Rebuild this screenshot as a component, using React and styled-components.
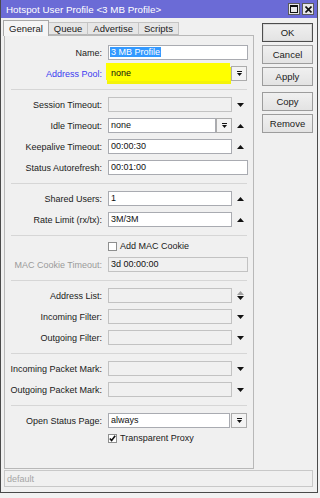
import React from 'react';
import styled, { createGlobalStyle } from 'styled-components';

const GlobalStyle = createGlobalStyle`
  html, body {
    margin: 0;
    padding: 0;
    background: #f2f2f2;
  }
  body {
    font-family: "Liberation Sans", Arial, sans-serif;
    font-size: 9px;
    color: #1a1a1a;
  }
`;

const Window = styled.div`
  width: 318px;
  height: 493px;
  box-sizing: border-box;
  background: #f0f0f0;
  border: 1px solid #4a4a4a;
  border-top: none;
  display: flex;
  flex-direction: column;
`;

const TitleBar = styled.div`
  height: 18px;
  flex-shrink: 0;
  background: #6b6bd6;
  color: #fff;
  display: flex;
  align-items: center;
  padding: 0 3px 0 5px;
  font-size: 9.8px;
`;

const Title = styled.div`
  flex: 1;
  white-space: nowrap;
`;

const CaptionButton = styled.div`
  width: 12px;
  height: 12px;
  box-sizing: border-box;
  margin-left: 2px;
  background: #e8e8e8;
  border: 1px solid #5a5a5a;
  display: flex;
  align-items: center;
  justify-content: center;
`;

const Body = styled.div`
  flex: 1;
  display: flex;
  flex-direction: column;
  padding: 2px 4px 5px 3px;
`;

const Main = styled.div`
  display: flex;
  gap: 8px;
`;

const LeftColumn = styled.div`
  width: 250px;
  display: flex;
  flex-direction: column;
`;

const TabStrip = styled.div`
  height: 15px;
  display: flex;
  align-items: flex-end;
  position: relative;
  z-index: 1;
`;

const Tab = styled.div`
  box-sizing: border-box;
  height: ${p => (p.$active ? 16 : 13)}px;
  margin-bottom: ${p => (p.$active ? -1 : 0)}px;
  margin-left: ${p => (p.$first ? -1 : 0)}px;
  padding: 0 5px;
  display: flex;
  align-items: center;
  background: ${p => (p.$active ? '#f5f5f5' : '#e6e6e6')};
  border: 1px solid ${p => (p.$active ? '#a8a8a8' : '#c4c4c4')};
  border-bottom: ${p => (p.$active ? 'none' : '1px solid #b8b8b8')};
  border-left: ${p => (p.$active || p.$first ? undefined : 'none')};
  font-size: 9.5px;
  white-space: nowrap;
`;

const Panel = styled.div`
  height: 434px;
  box-sizing: border-box;
  border: 1px solid #b8b8b8;
  background: #f0f0f0;
  padding-top: 9px;
  display: flex;
  flex-direction: column;
  gap: 6px;
`;

const Row = styled.div`
  height: 15px;
  display: flex;
  align-items: center;
`;

const Label = styled.div`
  width: 97px;
  flex-shrink: 0;
  margin-right: 6px;
  text-align: right;
  white-space: nowrap;
  color: ${p => p.$color || '#1a1a1a'};
`;

const Field = styled.div`
  width: ${p => p.$w}px;
  height: 15px;
  box-sizing: border-box;
  flex-shrink: 0;
  padding: 0 2px;
  line-height: 13px;
  white-space: nowrap;
  overflow: hidden;
  background: ${p => (p.$highlight ? '#ffff00' : p.$disabled ? '#f0f0f0' : '#fff')};
  border: 1px solid ${p => (p.$highlight ? '#ffff00' : p.$disabled ? '#c2c2c2' : '#a9abb1')};
  box-shadow: ${p => (p.$highlight ? '-1px -2px 0 1px #ffff00, 0 2px 0 1px #f4f40a' : 'none')};
  color: #111;
`;

const Selected = styled.span`
  background: #3399ff;
  color: #fff;
  padding: 0 1px;
  margin-left: -1px;
`;

const DropButton = styled.div`
  width: 16px;
  height: 15px;
  box-sizing: border-box;
  margin-left: ${p => (p.$joined ? 0 : 1)}px;
  flex-shrink: 0;
  border: 1px solid #acacac;
  background: #f3f3f3;
  display: flex;
  align-items: center;
  justify-content: center;
`;

const ArrowSlot = styled.div`
  width: 16px;
  flex-shrink: 0;
  display: flex;
  flex-direction: column;
  align-items: center;
  justify-content: center;
  gap: 1px;
`;

const Separator = styled.div`
  height: 1px;
  margin: 2px 6px 1px 6px;
  background: #d6d6d6;
`;

const CheckRow = styled.label`
  height: 10px;
  margin-top: ${p => p.$pull || 0}px;
  display: flex;
  align-items: center;
  padding-left: 103px;
  gap: 3px;
  white-space: nowrap;
`;

const Box = styled.span`
  width: 9px;
  height: 9px;
  box-sizing: border-box;
  border: 1px solid #8e8f8f;
  background: #fff;
  display: flex;
  align-items: center;
  justify-content: center;
`;

const StatusBar = styled.div`
  margin-top: 1px;
  height: 17px;
  box-sizing: border-box;
  border: 1px solid #c8c8c8;
  background: #f0f0f0;
  color: #a5a5a5;
  padding-left: 2px;
  display: flex;
  align-items: center;
`;

const ButtonColumn = styled.div`
  width: 51px;
  padding-top: 3px;
  display: flex;
  flex-direction: column;
  gap: 3px;
`;

const Button = styled.div`
  height: 19px;
  box-sizing: border-box;
  margin-top: ${p => p.$gapTop || 0}px;
  border: 1px solid ${p => (p.$default ? '#4d4d4d' : '#9c9c9c')};
  box-shadow: ${p => (p.$default ? 'inset 0 0 0 1px #d8d8d8' : 'none')};
  background: linear-gradient(#f0f0f0, #e3e3e3);
  display: flex;
  align-items: center;
  justify-content: center;
  font-size: 9.5px;
`;

const Down = ({ color = '#111' }) => (
  <svg width="7" height="4" viewBox="0 0 7 4">
    <path d="M0 0h7L3.5 4z" fill={color} />
  </svg>
);

const Up = ({ color = '#111' }) => (
  <svg width="7" height="4" viewBox="0 0 7 4">
    <path d="M0 4h7L3.5 0z" fill={color} />
  </svg>
);

const DropIcon = () => (
  <svg width="5" height="5" viewBox="0 0 5 5">
    <rect x="0" y="0" width="5" height="1" fill="#111" />
    <path d="M0 2h5L2.5 5z" fill="#111" />
  </svg>
);

const Check = () => (
  <svg width="7" height="7" viewBox="0 0 7 7">
    <path d="M0.8 3.5l1.8 2 3.6-4.8" stroke="#111" strokeWidth="1.6" fill="none" />
  </svg>
);

export default function App() {
  return (
    <>
      <GlobalStyle />
      <Window>
        <TitleBar>
          <Title>Hotspot User Profile &lt;3 MB Profile&gt;</Title>
          <CaptionButton>
            <svg width="8" height="8" viewBox="0 0 8 8">
              <rect x="0.5" y="0.5" width="7" height="7" fill="none" stroke="#111" />
              <rect x="0" y="0" width="8" height="2" fill="#111" />
            </svg>
          </CaptionButton>
          <CaptionButton>
            <svg width="7" height="7" viewBox="0 0 7 7">
              <path d="M0.5 0.5l6 6M6.5 0.5l-6 6" stroke="#111" strokeWidth="1.6" />
            </svg>
          </CaptionButton>
        </TitleBar>
        <Body>
          <Main>
            <LeftColumn>
              <TabStrip>
                <Tab $active $first>General</Tab>
                <Tab>Queue</Tab>
                <Tab>Advertise</Tab>
                <Tab>Scripts</Tab>
              </TabStrip>
              <Panel>
                <Row>
                  <Label>Name:</Label>
                  <Field $w={140}><Selected>3 MB Profile</Selected></Field>
                </Row>
                <Row>
                  <Label $color="#3a3af0">Address Pool:</Label>
                  <Field $w={122} $highlight>none</Field>
                  <DropButton><DropIcon /></DropButton>
                </Row>
                <Separator />
                <Row>
                  <Label>Session Timeout:</Label>
                  <Field $w={124} $disabled />
                  <ArrowSlot><Down /></ArrowSlot>
                </Row>
                <Row>
                  <Label>Idle Timeout:</Label>
                  <Field $w={108}>none</Field>
                  <DropButton $joined><DropIcon /></DropButton>
                  <ArrowSlot><Up /></ArrowSlot>
                </Row>
                <Row>
                  <Label>Keepalive Timeout:</Label>
                  <Field $w={124}>00:00:30</Field>
                  <ArrowSlot><Up /></ArrowSlot>
                </Row>
                <Row>
                  <Label>Status Autorefresh:</Label>
                  <Field $w={140}>00:01:00</Field>
                </Row>
                <Separator />
                <Row>
                  <Label>Shared Users:</Label>
                  <Field $w={124}>1</Field>
                  <ArrowSlot><Up /></ArrowSlot>
                </Row>
                <Row>
                  <Label>Rate Limit (rx/tx):</Label>
                  <Field $w={124}>3M/3M</Field>
                  <ArrowSlot><Up /></ArrowSlot>
                </Row>
                <Separator />
                <CheckRow $pull={-2}>
                  <Box />
                  Add MAC Cookie
                </CheckRow>
                <Row>
                  <Label $color="#9a9a9a">MAC Cookie Timeout:</Label>
                  <Field $w={140} $disabled>3d 00:00:00</Field>
                </Row>
                <Separator />
                <Row>
                  <Label>Address List:</Label>
                  <Field $w={124} $disabled />
                  <ArrowSlot><Up color="#a0a0a0" /><Down /></ArrowSlot>
                </Row>
                <Row>
                  <Label>Incoming Filter:</Label>
                  <Field $w={124} $disabled />
                  <ArrowSlot><Down /></ArrowSlot>
                </Row>
                <Row>
                  <Label>Outgoing Filter:</Label>
                  <Field $w={124} $disabled />
                  <ArrowSlot><Down /></ArrowSlot>
                </Row>
                <Separator />
                <Row>
                  <Label>Incoming Packet Mark:</Label>
                  <Field $w={124} $disabled />
                  <ArrowSlot><Down /></ArrowSlot>
                </Row>
                <Row>
                  <Label>Outgoing Packet Mark:</Label>
                  <Field $w={124} $disabled />
                  <ArrowSlot><Down /></ArrowSlot>
                </Row>
                <Separator />
                <Row>
                  <Label>Open Status Page:</Label>
                  <Field $w={122}>always</Field>
                  <DropButton><DropIcon /></DropButton>
                </Row>
                <CheckRow $pull={-1}>
                  <Box><Check /></Box>
                  Transparent Proxy
                </CheckRow>
              </Panel>
            </LeftColumn>
            <ButtonColumn>
              <Button $default>OK</Button>
              <Button>Cancel</Button>
              <Button>Apply</Button>
              <Button $gapTop={3}>Copy</Button>
              <Button>Remove</Button>
            </ButtonColumn>
          </Main>
          <StatusBar>default</StatusBar>
        </Body>
      </Window>
    </>
  );
}
